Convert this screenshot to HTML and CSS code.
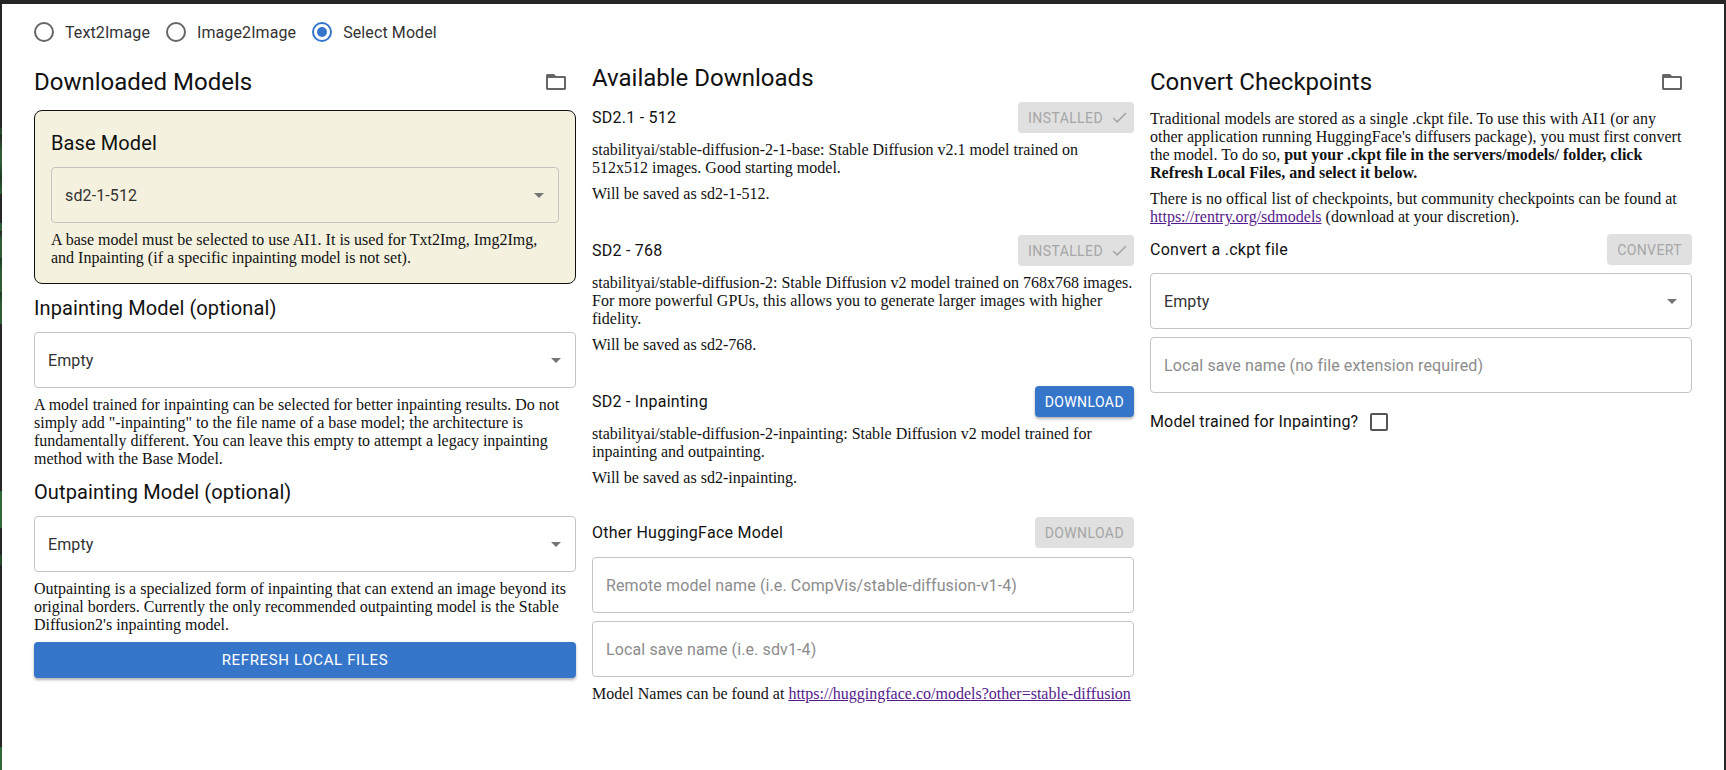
FILE: index.html
```html
<!DOCTYPE html>
<html lang="en">
<head>
  <meta charset="UTF-8">
  <title>AI1 - Select Model</title>
  <link rel="stylesheet" href="styles.css">
</head>
<body>
  <div class="page">
    <div class="tabs">
      <label class="radio"><span class="radio-ring"></span>Text2Image</label>
      <label class="radio"><span class="radio-ring"></span>Image2Image</label>
      <label class="radio selected"><span class="radio-ring"><span class="radio-dot"></span></span>Select Model</label>
    </div>

    <div class="columns">
      <!-- downloaded models -->
      <section class="col">
        <div class="col-title">
          <h2>Downloaded Models</h2>
          <svg class="folder" viewBox="0 0 24 24"><path fill-rule="evenodd" d="M3 4h7l2 2h9l1 1v12l-1 1H3l-1-1V5zM4 8v10h16V8z"/></svg>
        </div>
        <div class="base-box">
          <h3>Base Model</h3>
          <div class="select"><span>sd2-1-512</span><span class="arrow"></span></div>
          <p class="note">A base model must be selected to use AI1. It is used for Txt2Img, Img2Img, and Inpainting (if a specific inpainting model is not set).</p>
        </div>
        <h3 class="opt-title">Inpainting Model (optional)</h3>
        <div class="select"><span>Empty</span><span class="arrow"></span></div>
        <p class="note">A model trained for inpainting can be selected for better inpainting results. Do not simply add "-inpainting" to the file name of a base model; the architecture is fundamentally different. You can leave this empty to attempt a legacy inpainting method with the Base Model.</p>
        <h3 class="opt-title">Outpainting Model (optional)</h3>
        <div class="select"><span>Empty</span><span class="arrow"></span></div>
        <p class="note">Outpainting is a specialized form of inpainting that can extend an image beyond its original borders. Currently the only recommended outpainting model is the Stable Diffusion2's inpainting model.</p>
        <button class="btn wide">Refresh Local Files</button>
      </section>

      <!-- available downloads -->
      <section class="col">
        <h2 class="downloads-title">Available Downloads</h2>

        <div class="model">
          <div class="model-head">
            <span>SD2.1 - 512</span>
            <button class="btn off installed">Installed <svg class="check" viewBox="0 0 24 24"><path d="M9 16.17 4.83 12l-1.42 1.41L9 19 21 7l-1.41-1.41z"/></svg></button>
          </div>
          <p class="desc">stabilityai/stable-diffusion-2-1-base: Stable Diffusion v2.1 model trained on 512x512 images. Good starting model.</p>
          <p class="desc">Will be saved as sd2-1-512.</p>
        </div>

        <div class="model">
          <div class="model-head">
            <span>SD2 - 768</span>
            <button class="btn off installed">Installed <svg class="check" viewBox="0 0 24 24"><path d="M9 16.17 4.83 12l-1.42 1.41L9 19 21 7l-1.41-1.41z"/></svg></button>
          </div>
          <p class="desc">stabilityai/stable-diffusion-2: Stable Diffusion v2 model trained on 768x768 images. For more powerful GPUs, this allows you to generate larger images with higher fidelity.</p>
          <p class="desc">Will be saved as sd2-768.</p>
        </div>

        <div class="model last">
          <div class="model-head">
            <span>SD2 - Inpainting</span>
            <button class="btn">Download</button>
          </div>
          <p class="desc">stabilityai/stable-diffusion-2-inpainting: Stable Diffusion v2 model trained for inpainting and outpainting.</p>
          <p class="desc">Will be saved as sd2-inpainting.</p>
        </div>

        <div class="model-head other">
          <span>Other HuggingFace Model</span>
          <button class="btn off">Download</button>
        </div>
        <div class="field"><span class="placeholder">Remote model name (i.e. CompVis/stable-diffusion-v1-4)</span></div>
        <div class="field"><span class="placeholder">Local save name (i.e. sdv1-4)</span></div>
        <p class="note">Model Names can be found at <a href="#">https://huggingface.co/models?other=stable-diffusion</a></p>
      </section>

      <!-- convert -->
      <section class="col">
        <div class="col-title">
          <h2>Convert Checkpoints</h2>
          <svg class="folder" viewBox="0 0 24 24"><path fill-rule="evenodd" d="M3 4h7l2 2h9l1 1v12l-1 1H3l-1-1V5zM4 8v10h16V8z"/></svg>
        </div>
        <p class="desc">Traditional models are stored as a single .ckpt file. To use this with AI1 (or any other application running HuggingFace's diffusers package), you must first convert the model. To do so, <strong>put your .ckpt file in the servers/models/ folder, click Refresh Local Files, and select it below.</strong></p>
        <p class="desc">There is no offical list of checkpoints, but community checkpoints can be found at <a href="#">https://rentry.org/sdmodels</a> (download at your discretion).</p>
        <div class="model-head convert-head">
          <span>Convert a .ckpt file</span>
          <button class="btn off">Convert</button>
        </div>
        <div class="select"><span>Empty</span><span class="arrow"></span></div>
        <div class="field"><span class="placeholder">Local save name (no file extension required)</span></div>
        <label class="check-row">Model trained for Inpainting? <span class="checkbox"></span></label>
      </section>
    </div>
  </div>
</body>
</html>
```

FILE: styles.css
```css
html, body {
  height: 100%;
}

body {
  margin: 0;
  /* strip of the desktop showing down the left edge of the window */
  background: #262626 linear-gradient(
    #262626 128px, #24482c 128px, #24482c 135px,
    #262626 135px, #2f5e35 152px, #2f5e35 162px,
    #1f3a25 177px, #2f5e35 194px, #262626 194px,
    #262626 223px, #2f5e35 223px, #2f5e35 231px,
    #262626 231px, #2f5e35 241px, #2f5e35 258px,
    #1f3a25 258px, #2f5e35 273px, #2f5e35 292px,
    #1f3a25 292px, #2f5e35 305px, #2f5e35 324px,
    #262626 324px, #262626 491px,
    #2f6a36 491px, #2f6a36 528px, #262626 528px,
    #262626 555px, #24482c 555px, #24482c 565px,
    #262626 565px, #262626 747px,
    #2f6a36 747px
  ) left top / 2px 100% no-repeat;
  font-family: "Liberation Serif", serif;
  font-size: 16px;
  color: #111;
  overflow: hidden;
}

.page {
  box-sizing: border-box;
  height: 766px;
  margin: 4px 2px 0 2px;
  padding: 7px 32px 0 32px;
  background-color: #fff;
  overflow: hidden;
}

.tabs {
  display: flex;
  height: 42px;
  align-items: center;
  font-family: Roboto, sans-serif;
  letter-spacing: 0.1px;
}

.radio {
  display: flex;
  align-items: center;
  margin-right: 16px;
  color: #333;
}

.radio-ring {
  box-sizing: border-box;
  display: flex;
  align-items: center;
  justify-content: center;
  width: 20px;
  height: 20px;
  margin-right: 11px;
  border: 2px solid #666;
  border-radius: 50%;
}

.selected .radio-ring {
  border-color: #3576cb;
}

.radio-dot {
  width: 10px;
  height: 10px;
  border-radius: 50%;
  background-color: #3576cb;
}

.columns {
  display: grid;
  grid-template-columns: repeat(3, 542px);
  column-gap: 16px;
}

h2 {
  margin: 0;
  font-family: Roboto, sans-serif;
  font-size: 24px;
  font-weight: 400;
  line-height: 32px;
}

h3 {
  margin: 0;
  font-family: Roboto, sans-serif;
  font-size: 20px;
  font-weight: 400;
  line-height: 32px;
  letter-spacing: 0.1px;
}

.col-title {
  display: flex;
  justify-content: space-between;
  align-items: center;
  height: 32px;
  margin: 13px 0 12px;
}

.folder {
  width: 24px;
  height: 24px;
  margin-right: 8px;
  fill: #666;
}

.base-box {
  box-sizing: border-box;
  height: 174px;
  padding: 16px;
  background-color: #f4f2df;
  border: 1px solid #111;
  border-radius: 8px;
}

.base-box h3 {
  margin-bottom: 8px;
}

.select,
.field {
  box-sizing: border-box;
  display: flex;
  justify-content: space-between;
  align-items: center;
  height: 56px;
  padding: 0 13px;
  border: 1px solid #c4c4c4;
  border-radius: 4px;
  font-family: Roboto, sans-serif;
  color: #333;
  letter-spacing: 0.12px;
}

.arrow {
  width: 0;
  height: 0;
  margin-right: 1px;
  border-left: 5px solid transparent;
  border-right: 5px solid transparent;
  border-top: 5px solid #757575;
}

.note {
  margin: 8px 0 0;
}

.opt-title {
  margin: 8px 0;
}

.btn {
  display: inline-flex;
  align-items: center;
  justify-content: center;
  height: 31px;
  padding: 0 10px;
  border: none;
  border-radius: 4px;
  background-color: #3576cb;
  color: #fff;
  font-family: Roboto, sans-serif;
  font-size: 14px;
  letter-spacing: 0.4px;
  text-transform: uppercase;
  box-shadow: 0 2px 3px rgba(0, 0, 0, 0.3);
}

.btn.wide {
  width: 100%;
  height: 36px;
  margin-top: 8px;
  font-size: 15px;
  letter-spacing: 0.65px;
}

.btn.off {
  background-color: #e0e0e0;
  color: #a6a6a6;
  box-shadow: none;
}

.btn.installed {
  padding: 0 5px 0 10px;
}

.check {
  width: 19px;
  height: 19px;
  margin-left: 7px;
  fill: #a6a6a6;
}

.downloads-title {
  margin: 9px 0 8px;
}

.model {
  margin-bottom: 32px;
}

.model.last {
  margin-bottom: 30px;
}

.model-head {
  display: flex;
  justify-content: space-between;
  align-items: center;
  font-family: Roboto, sans-serif;
  line-height: 31px;
  letter-spacing: 0.25px;
}

.desc {
  margin: 0 0 8px;
}

.model-head + .desc {
  margin-top: 8px;
}

.other {
  margin-bottom: 9px;
}

.other + .field {
  margin-bottom: 8px;
}

.placeholder {
  color: #8c8c8c;
}

.convert-head {
  margin-bottom: 8px;
}

.convert-head + .select {
  margin-bottom: 8px;
}

.check-row {
  display: flex;
  align-items: center;
  margin-top: 19px;
  font-family: Roboto, sans-serif;
  letter-spacing: 0.15px;
}

.checkbox {
  box-sizing: border-box;
  width: 18px;
  height: 18px;
  margin-left: 12px;
  border: 2px solid #555;
  border-radius: 2px;
}

a {
  color: #551a8b;
}
```
